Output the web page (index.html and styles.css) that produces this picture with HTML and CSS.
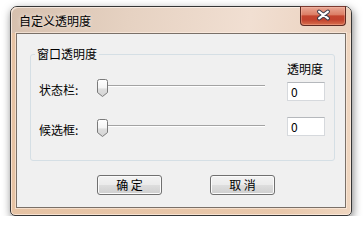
FILE: index.html
```html
<!DOCTYPE html>
<html>
<head>
<meta charset="utf-8">
<link rel="stylesheet" href="styles.css">
</head>
<body>
<div class="desk">
  <div class="window">
    <div class="titlebar">
      <span class="title">自定义透明度</span>
      <div class="close">
        <svg width="46" height="19" viewBox="0 0 46 19">
          <path d="M19.5 5.5 L28.5 12.5 M28.5 5.5 L19.5 12.5" stroke="#3b3b4a" stroke-width="4.2" stroke-linecap="round" fill="none"/>
          <path d="M19.5 5.5 L28.5 12.5 M28.5 5.5 L19.5 12.5" stroke="#ffffff" stroke-width="2.2" stroke-linecap="round" fill="none"/>
        </svg>
      </div>
    </div>
    <div class="client">
      <fieldset class="group">
        <legend class="group-title">窗口透明度</legend>
        <div class="group-body">
          <div class="sliders">
            <div class="row">
              <span class="label">状态栏:</span>
              <div class="slider">
                <svg class="thumb" width="11" height="18" viewBox="0 0 11 18">
                  <defs>
                    <linearGradient id="tg1" x1="0" y1="0" x2="0" y2="1">
                      <stop offset="0" stop-color="#ffffff"/>
                      <stop offset="0.5" stop-color="#f4f4f4"/>
                      <stop offset="0.55" stop-color="#dedede"/>
                      <stop offset="1" stop-color="#d4d4d4"/>
                    </linearGradient>
                  </defs>
                  <path d="M0.5 2.5 Q0.5 0.5 2.5 0.5 H8.5 Q10.5 0.5 10.5 2.5 V13.5 L5.5 17.5 L0.5 13.5 Z" fill="url(#tg1)" stroke="#7a7a7a"/>
                </svg>
              </div>
            </div>
            <div class="row">
              <span class="label">候选框:</span>
              <div class="slider">
                <svg class="thumb" width="11" height="18" viewBox="0 0 11 18">
                  <path d="M0.5 2.5 Q0.5 0.5 2.5 0.5 H8.5 Q10.5 0.5 10.5 2.5 V13.5 L5.5 17.5 L0.5 13.5 Z" fill="url(#tg1)" stroke="#7a7a7a"/>
                </svg>
              </div>
            </div>
          </div>
          <div class="values">
            <div class="values-head">透明度</div>
            <div class="value">0</div>
            <div class="value value-second">0</div>
          </div>
        </div>
      </fieldset>
      <div class="buttons">
        <div class="btn">确 定</div>
        <div class="btn">取 消</div>
      </div>
    </div>
  </div>
</div>
</body>
</html>
```
FILE: styles.css
```css
html, body {
  margin: 0;
  background: #ffffff;
}
body {
  font: 12px/14px "Noto Sans CJK SC", sans-serif;
  color: #000;
}
.desk {
  padding: 6px 0 0 10px;
}
.window {
  width: 342px;
  height: 210px;
  box-sizing: border-box;
  border: 1px solid #363636;
  border-radius: 7px 7px 5px 5px;
  background: linear-gradient(90deg, #e6c3a4 0%, #e9c8ab 80%, #efd6c0 100%);
  box-shadow: inset 0 0 0 1px rgba(255, 240, 228, 0.7), 1px 3px 8px rgba(0, 0, 0, 0.5);
  display: flex;
  flex-direction: column;
}
.titlebar {
  height: 26px;
  display: flex;
  align-items: flex-start;
  border-radius: 6px 6px 0 0;
  background: linear-gradient(100deg, #d6c0ae 0%, #e6d2c2 35%, #f1dfd2 70%, #ead0bc 100%);
  box-shadow: inset 1px 1px 0 rgba(255, 245, 238, 0.7);
}
.title {
  padding: 7px 0 0 8px;
  line-height: 14px;
  color: #000;
  text-shadow: 0 0 4px rgba(255, 255, 255, 0.8);
}
.close {
  margin-left: auto;
  margin-right: 5px;
  margin-top: -1px;
  width: 46px;
  height: 20px;
  box-sizing: border-box;
  border: 1px solid #5e2a22;
  border-top-color: #7a3a30;
  border-radius: 0 0 4px 4px;
  background: linear-gradient(#eaa895 0%, #dc7e66 42%, #c4452f 50%, #c2432e 72%, #d8704f 100%);
  box-shadow: inset 0 0 0 1px rgba(255, 200, 180, 0.35);
  display: flex;
}
.close svg {
  display: block;
  margin: -1px 0 0 -1px;
}
.client {
  margin: 0 5px;
  height: 175px;
  box-sizing: border-box;
  border: 1px solid #7a7068;
  background: #f0f0f0;
  box-shadow: 0 0 0 1px rgba(255, 240, 228, 0.6);
}
.group {
  margin: 13px 10px 0 13px;
  padding: 0 9px 23px 8px;
  border: 1px solid #d5dfe5;
  border-radius: 3px;
  min-width: 0;
}
.group-title {
  margin-left: -4px;
  padding: 0 2px;
  line-height: 14px;
}
.group-body {
  display: flex;
}
.sliders {
  width: 226px;
  padding-top: 18px;
  display: flex;
  flex-direction: column;
  gap: 22px;
}
.row {
  display: flex;
  height: 18px;
}
.label {
  width: 58px;
  padding-top: 4px;
  line-height: 14px;
}
.slider {
  width: 168px;
  height: 18px;
  background:
    linear-gradient(#a3a3a3, #a3a3a3) no-repeat 4px 6px / 164px 1px,
    linear-gradient(#ffffff, #ffffff) no-repeat 4px 7px / 164px 1px;
}
.thumb {
  display: block;
}
.values {
  margin-left: 22px;
  display: flex;
  flex-direction: column;
}
.values-head {
  margin-top: 1px;
  height: 14px;
  line-height: 14px;
}
.value {
  margin-top: 6px;
  width: 38px;
  height: 19px;
  box-sizing: border-box;
  border: 1px solid #d6d9dd;
  border-top-color: #b5b8bc;
  background: #ffffff;
  padding-left: 3px;
  line-height: 17px;
}
.value-second {
  margin-top: 16px;
}
.buttons {
  display: flex;
  gap: 48px;
  padding-left: 80px;
  margin-top: 14px;
}
.btn {
  width: 65px;
  height: 20px;
  box-sizing: border-box;
  border: 1px solid #707070;
  border-radius: 3px;
  background: linear-gradient(#f3f3f3 0%, #ebebeb 48%, #dddddd 52%, #cfcfcf 100%);
  box-shadow: inset 0 0 0 1px #fbfbfb;
  text-align: center;
  line-height: 18px;
}
```
